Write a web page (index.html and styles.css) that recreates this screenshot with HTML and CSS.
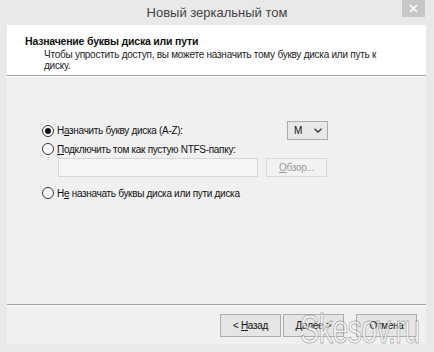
FILE: index.html
```html
<!DOCTYPE html>
<html>
<head>
    <title>Новый зеркальный том</title>
    <link rel="stylesheet" href="styles.css">
</head>
<body>
    <div class="window">
        <div class="titlebar">
            <span class="title">Новый зеркальный том</span>
            <div class="close">
                <svg width="9" height="9" viewBox="0 0 9 9">
                    <path d="M1 1L8 8M8 1L1 8" stroke="#fff" stroke-width="1.6" fill="none"/>
                </svg>
            </div>
        </div>

        <div class="client">
            <div class="header">
                <div class="header-title">Назначение буквы диска или пути</div>
                <div class="header-desc">Чтобы упростить доступ, вы можете назначить тому букву диска или путь к<br>диску.</div>
            </div>

            <div class="content">
                <div class="row row-first">
                    <span class="radio checked"></span>
                    <span class="label">Н<u>а</u>значить букву диска (A-Z):</span>
                    <div class="select">
                        <span>M</span>
                        <svg width="8" height="5" viewBox="0 0 8 5">
                            <path d="M0.5 0.8L4 4L7.5 0.8" stroke="#333" stroke-width="1.3" fill="none"/>
                        </svg>
                    </div>
                </div>
                <div class="row">
                    <span class="radio"></span>
                    <span class="label"><u>П</u>одключить том как пустую NTFS-папку:</span>
                </div>
                <div class="row row-path">
                    <div class="path-field"></div>
                    <div class="btn btn-disabled"><span><u>О</u>бзор...</span></div>
                </div>
                <div class="row row-last">
                    <span class="radio"></span>
                    <span class="label">Н<u>е</u> назначать буквы диска или пути диска</span>
                </div>
            </div>

            <div class="footer">
                <div class="btn"><span>&lt; <u>Н</u>азад</span></div>
                <div class="btn"><span><u>Д</u>алее &gt;</span></div>
                <div class="btn btn-cancel"><span>Отмена</span></div>
            </div>
        </div>

        <div class="watermark">Skesov.ru</div>
    </div>
</body>
</html>
```

FILE: styles.css
```css
* {
    box-sizing: border-box;
}

body {
    margin: 0;
    padding: 0;
    font-family: "Liberation Sans", Arial, sans-serif;
    font-size: 10px;
    letter-spacing: -0.3px;
    color: #111;
    background-color: #e9e9e9;
}

.window {
    position: relative;
    width: 434px;
    height: 352px;
    overflow: hidden;
    display: flex;
    flex-direction: column;
}

.titlebar {
    position: relative;
    height: 25px;
    display: flex;
    justify-content: center;
    align-items: center;
}

.title {
    font-size: 13px;
    letter-spacing: 0;
    color: #444;
}

.close {
    position: absolute;
    top: 0;
    right: 9px;
    width: 23px;
    height: 17px;
    background-color: #c7c7c7;
    display: flex;
    justify-content: center;
    align-items: center;
}

.client {
    flex: 1;
    margin: 0 8px 8px 7px;
    background-color: #f0f0f0;
    display: flex;
    flex-direction: column;
}

.header {
    height: 51px;
    padding: 9px 0 0 18px;
    background-color: #fff;
    border-bottom: 1px solid #a0a0a0;
}

.header-title {
    font-weight: bold;
    font-size: 10.5px;
    letter-spacing: -0.2px;
    line-height: 14px;
}

.header-desc {
    margin-top: 1px;
    padding-left: 19px;
    line-height: 11px;
    letter-spacing: -0.25px;
    white-space: nowrap;
    color: #222;
}

.content {
    flex: 1;
    padding: 44px 0 0 35px;
    border-top: 1px solid #fff;
}

.row {
    width: 286px;
    height: 18px;
    display: flex;
    align-items: center;
}

.row-first {
    height: 19px;
}

.row-path {
    height: 19px;
    padding-left: 16px;
    gap: 8px;
}

.row-last {
    margin-top: 7px;
}

.radio {
    width: 12px;
    height: 12px;
    border: 1px solid #333;
    border-radius: 50%;
    background-color: #fff;
    display: flex;
    justify-content: center;
    align-items: center;
    margin-right: 3px;
}

.radio.checked::after {
    content: "";
    width: 6px;
    height: 6px;
    border-radius: 50%;
    background-color: #111;
}

.label {
    flex: 1;
    white-space: nowrap;
}

.select {
    width: 41px;
    height: 19px;
    padding: 0 5px 0 6px;
    border: 1px solid #acacac;
    background-color: #e8e8e8;
    display: flex;
    justify-content: space-between;
    align-items: center;
}

.path-field {
    width: 200px;
    height: 19px;
    border: 1px solid #d6d6d6;
    background-color: #f5f5f5;
}

.btn {
    width: 61px;
    height: 23px;
    border: 1px solid #adadad;
    background-color: #e5e5e5;
    display: flex;
    justify-content: center;
    align-items: center;
}

.btn-disabled {
    height: 19px;
    border-color: #d9d9d9;
    background-color: #f2f2f2;
    color: #9a9a9a;
}

.footer {
    height: 40px;
    padding: 9px 9px 0 0;
    border-top: 1px solid #a0a0a0;
    box-shadow: inset 0 1px 0 #fff;
    display: flex;
    justify-content: flex-end;
    gap: 2px;
}

.btn-cancel {
    margin-left: 10px;
}

.watermark {
    position: absolute;
    left: 300px;
    top: 307px;
    font-size: 40px;
    color: rgba(255, 255, 255, 0.6);
    -webkit-text-stroke: 1px rgba(120, 120, 120, 0.55);
    transform: scaleX(0.72);
    transform-origin: left top;
    letter-spacing: -1px;
}
```
